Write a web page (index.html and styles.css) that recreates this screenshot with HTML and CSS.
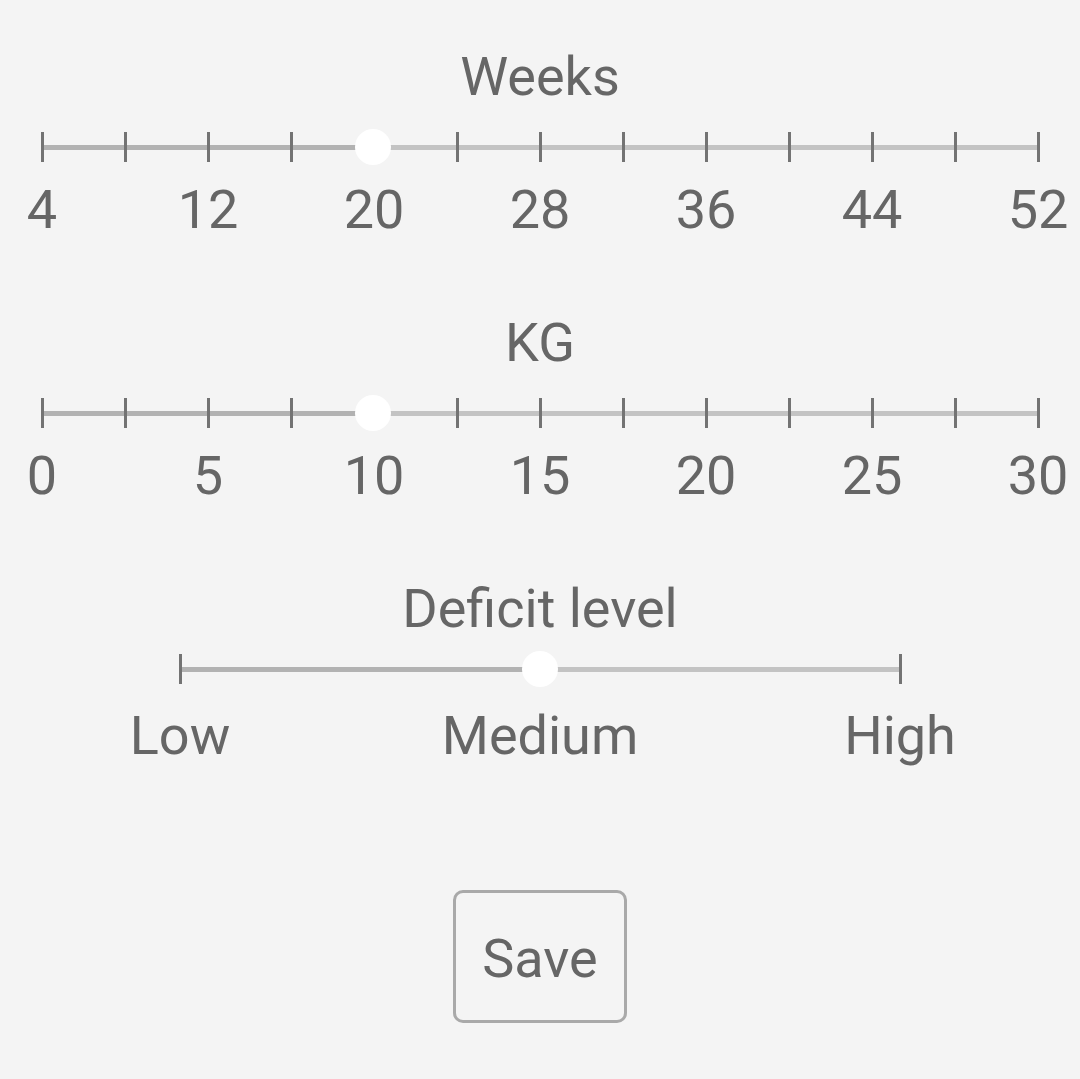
FILE: index.html
```html
<!DOCTYPE html>
<html>
<head>
<meta charset="utf-8">
<link rel="stylesheet" href="styles.css">
</head>
<body>
<main class="page">
  <section class="field">
    <div class="field-title">Weeks</div>
    <div class="slider" style="--p: 33.333%">
      <span class="tick"></span><span class="tick"></span><span class="tick"></span><span class="tick"></span><span class="tick"></span><span class="tick"></span><span class="tick"></span><span class="tick"></span><span class="tick"></span><span class="tick"></span><span class="tick"></span><span class="tick"></span><span class="tick"></span>
      <span class="thumb"></span>
    </div>
    <div class="labels">
      <span class="label"><span>4</span></span>
      <span class="label"><span>12</span></span>
      <span class="label"><span>20</span></span>
      <span class="label"><span>28</span></span>
      <span class="label"><span>36</span></span>
      <span class="label"><span>44</span></span>
      <span class="label"><span>52</span></span>
    </div>
  </section>

  <section class="field">
    <div class="field-title">KG</div>
    <div class="slider" style="--p: 33.333%">
      <span class="tick"></span><span class="tick"></span><span class="tick"></span><span class="tick"></span><span class="tick"></span><span class="tick"></span><span class="tick"></span><span class="tick"></span><span class="tick"></span><span class="tick"></span><span class="tick"></span><span class="tick"></span><span class="tick"></span>
      <span class="thumb"></span>
    </div>
    <div class="labels">
      <span class="label"><span>0</span></span>
      <span class="label"><span>5</span></span>
      <span class="label"><span>10</span></span>
      <span class="label"><span>15</span></span>
      <span class="label"><span>20</span></span>
      <span class="label"><span>25</span></span>
      <span class="label"><span>30</span></span>
    </div>
  </section>

  <section class="field field-deficit">
    <div class="field-title">Deficit level</div>
    <div class="slider slider-short" style="--p: 50%">
      <span class="tick"></span><span class="tick"></span>
      <span class="thumb"></span>
    </div>
    <div class="labels labels-short">
      <span class="label"><span>Low</span></span>
      <span class="label"><span>Medium</span></span>
      <span class="label"><span>High</span></span>
    </div>
  </section>

  <div class="actions">
    <button class="save-btn" type="button">Save</button>
  </div>
</main>
</body>
</html>
```

FILE: styles.css
```css
html, body {
  margin: 0;
  padding: 0;
  background: #f4f4f4;
}

body {
  font-family: Roboto, "Noto Sans", "Liberation Sans", sans-serif;
  color: #666666;
  font-size: 54px;
  line-height: 64px;
}

.page {
  display: flex;
  flex-direction: column;
  padding-top: 45px;
}

.field {
  display: flex;
  flex-direction: column;
  margin-bottom: 69px;
}

.field-title {
  text-align: center;
  height: 64px;
  margin-bottom: 20px;
}

.slider {
  position: relative;
  height: 36px;
  margin: 0 40.5px;
  display: flex;
  justify-content: space-between;
  align-items: center;
  background-image: linear-gradient(to right, #b2b2b2 0, #b2b2b2 var(--p), #c3c3c3 var(--p), #c3c3c3 100%);
  background-size: 100% 5px;
  background-position: center;
  background-repeat: no-repeat;
}

.tick {
  width: 3px;
  height: 30px;
  background: #737373;
}

.thumb {
  position: absolute;
  top: 0;
  left: var(--p);
  width: 36px;
  height: 36px;
  margin-left: -18px;
  border-radius: 50%;
  background: #ffffff;
}

.labels {
  display: flex;
  justify-content: space-between;
  margin: 13px 42px 0;
  height: 64px;
}

.label {
  width: 0;
  display: flex;
  justify-content: center;
  white-space: nowrap;
}

.field-deficit .field-title {
  margin-bottom: 10px;
}

.slider-short {
  margin: 0 178px 0 178.5px;
}

.labels-short {
  margin: 17px 180px 0;
}

.actions {
  display: flex;
  justify-content: center;
  margin-top: 53px;
}

.save-btn {
  font-family: inherit;
  font-size: 54px;
  line-height: 64px;
  color: #666666;
  background: transparent;
  border: 3px solid #a9a9a9;
  border-radius: 10px;
  padding: 34px 26px 29px;
  margin: 0;
  width: 174px;
  height: 133px;
  display: flex;
  justify-content: center;
  align-items: flex-start;
}
```
